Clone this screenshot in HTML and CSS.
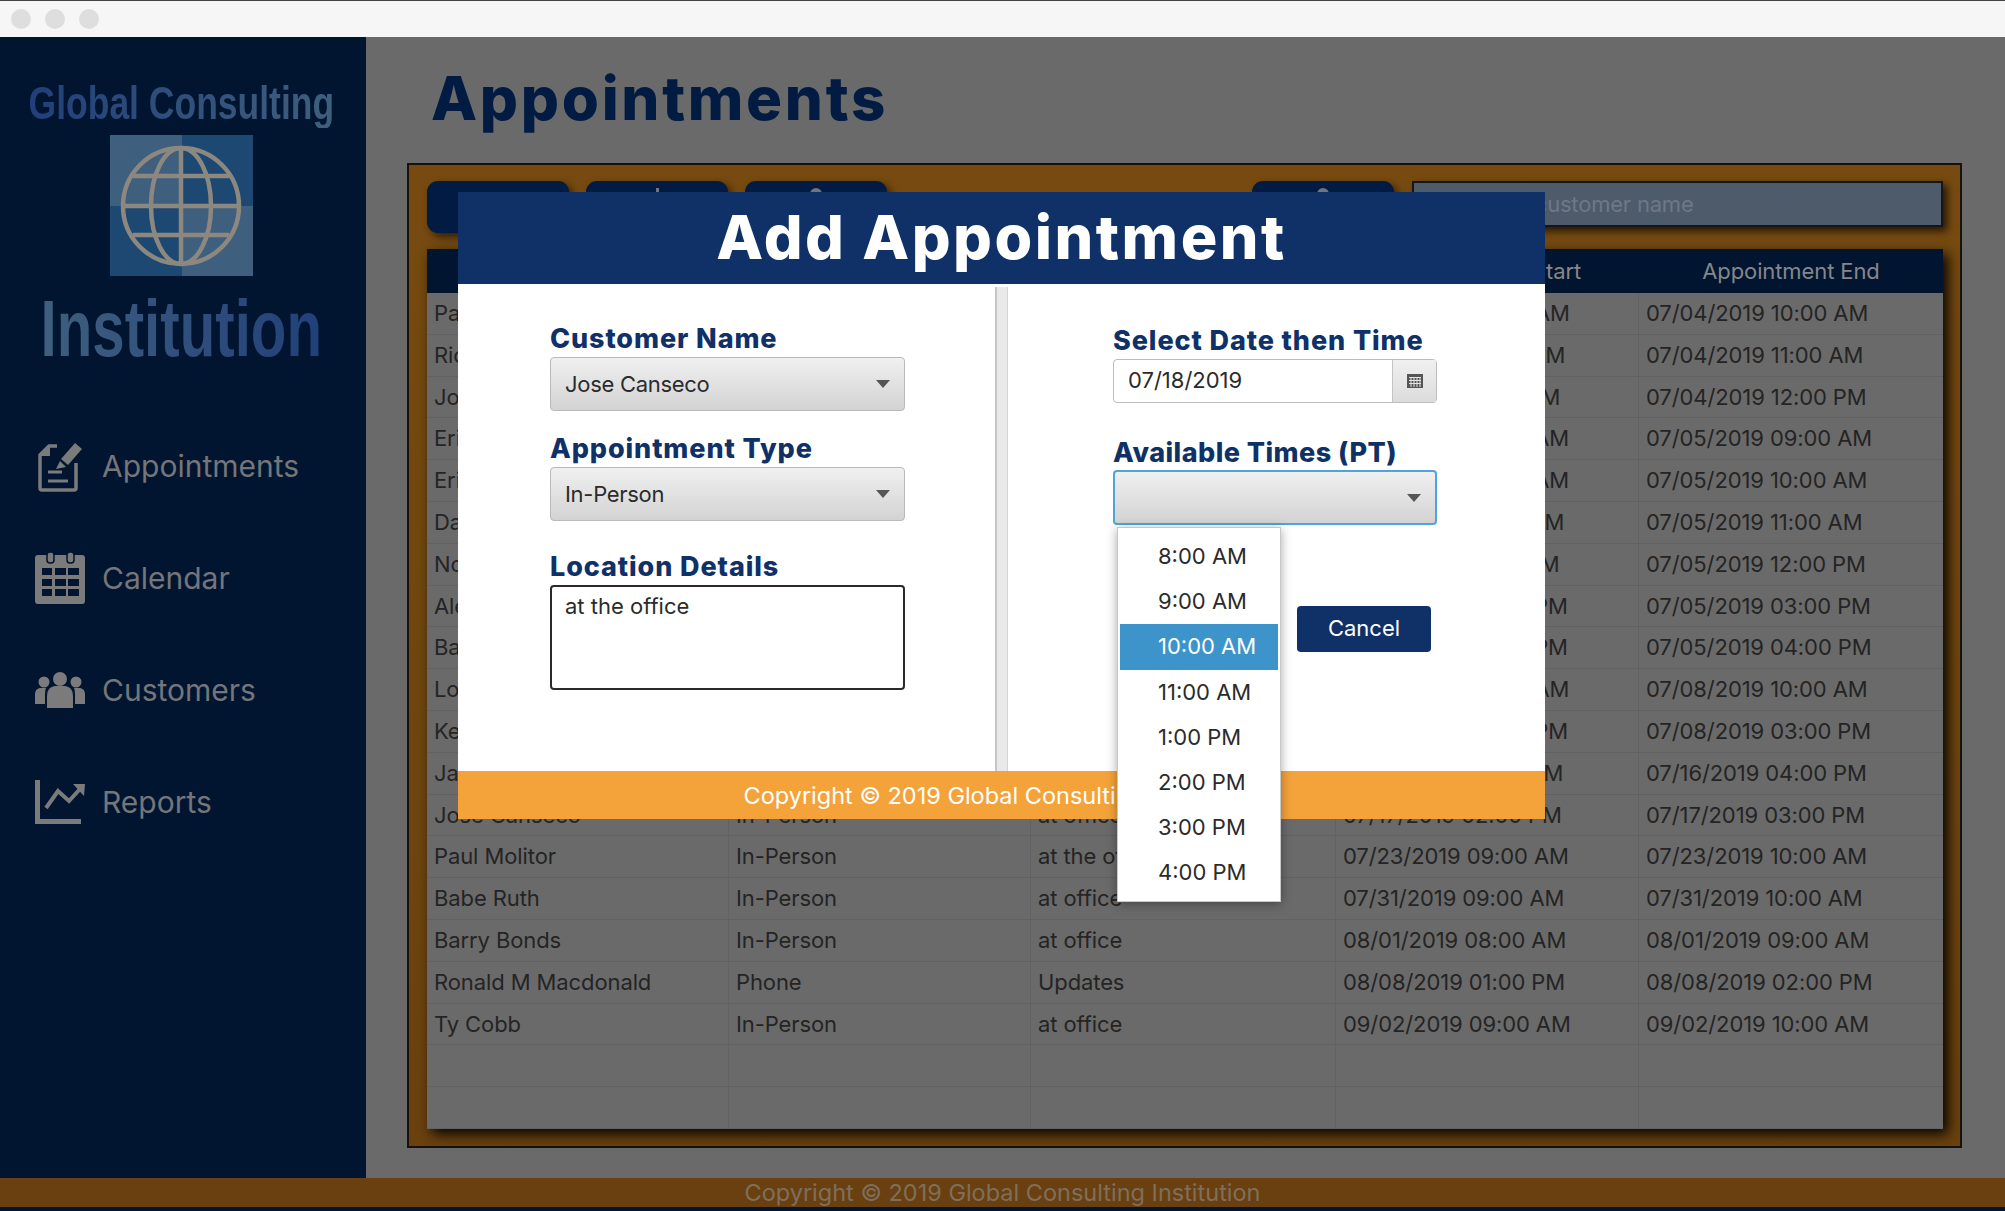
FILE: index.html
```html
<!DOCTYPE html>
<html lang="en">
<head>
    <meta charset="UTF-8">
    <title>Appointments</title>
    <link rel="stylesheet" href="styles.css">
</head>
<body>

<div class="titlebar">
    <span class="dot"></span>
    <span class="dot"></span>
    <span class="dot"></span>
</div>

<div class="app">
    <div class="sidebar">
        <div class="brand">
            <div class="brand-top">Global Consulting</div>
            <svg class="globe" viewBox="0 0 143 141">
                <rect width="72" height="71" fill="#3f5f7e"/>
                <rect x="72" width="71" height="71" fill="#1d4872"/>
                <rect y="71" width="72" height="70" fill="#1d4872"/>
                <rect x="72" y="71" width="71" height="70" fill="#3f5f7e"/>
                <g fill="none" stroke="#8c8880" stroke-width="4.5">
                    <circle cx="71" cy="71" r="58"/>
                    <ellipse cx="71" cy="71" rx="30" ry="58"/>
                    <path d="M71 13V129M13 71H129M23 41H119M23 100H119"/>
                </g>
            </svg>
            <div class="brand-bottom">Institution</div>
        </div>
        <ul class="nav">
            <li>
                <svg class="nav-icon" viewBox="0 0 50 52">
                    <path d="M22 6H14L5 15V48Q5 50 7 50H39Q41 50 41 48V23" fill="none" stroke="#7b7b7b" stroke-width="3.5"/>
                    <path d="M15 6V16H5Z" fill="#7b7b7b"/>
                    <path d="M40 3L47 9L33 25L26 19Z" fill="#7b7b7b"/>
                    <path d="M25 21L31 27L21 29Z" fill="#7b7b7b"/>
                    <path d="M13 32H27M13 41H33" stroke="#7b7b7b" stroke-width="3"/>
                </svg>
                Appointments
            </li>
            <li>
                <svg class="nav-icon" viewBox="0 0 50 52">
                    <rect y="3" width="50" height="49" rx="3" fill="#7b7b7b"/>
                    <rect x="12" y="0" width="7" height="11" rx="3" fill="#7b7b7b" stroke="#011530" stroke-width="1.5"/>
                    <rect x="32" y="0" width="7" height="11" rx="3" fill="#7b7b7b" stroke="#011530" stroke-width="1.5"/>
                    <path d="M7 16h10v7H7zM20 16h11v7H20zM33 16h11v7H33zM7 27h10v7H7zM20 27h11v7H20zM33 27h11v7H33zM7 37h10v7H7zM20 37h11v7H20zM33 37h11v7H33z" fill="#011530"/>
                </svg>
                Calendar
            </li>
            <li>
                <svg class="nav-icon" viewBox="0 0 50 36">
                    <circle cx="25" cy="7" r="7" fill="#7b7b7b"/>
                    <circle cx="9" cy="10" r="5.5" fill="#7b7b7b"/>
                    <circle cx="41" cy="10" r="5.5" fill="#7b7b7b"/>
                    <path d="M12 36V24Q12 15 20 14H30Q38 15 38 24V36Z" fill="#7b7b7b"/>
                    <path d="M0 32V22Q0 17 5 16H11Q10 18 10 24V32ZM50 32V22Q50 17 45 16H39Q40 18 40 24V32Z" fill="#7b7b7b"/>
                </svg>
                Customers
            </li>
            <li>
                <svg class="nav-icon" viewBox="0 0 50 44">
                    <path d="M2.5 0V41.5H46" fill="none" stroke="#7b7b7b" stroke-width="5"/>
                    <path d="M11 28L23 11L34 21L45 9" fill="none" stroke="#7b7b7b" stroke-width="4"/>
                    <path d="M38 4L50 4L49 16Z" fill="#7b7b7b"/>
                </svg>
                Reports
            </li>
        </ul>
    </div>

    <div class="main">
        <h1>Appointments</h1>
        <div class="panel">
            <div class="toolbar">
                <button class="tool-btn"></button>
                <button class="tool-btn"><span class="peek peek-tip"></span></button>
                <button class="tool-btn"><span class="peek"></span></button>
                <button class="tool-btn tool-search"><span class="peek"></span></button>
                <input class="search" type="text" placeholder="Search by customer name">
            </div>

            <div class="grid-table">
                <div class="grid-row grid-head">
                    <div></div>
                    <div></div>
                    <div></div>
                    <div>Appointment Start</div>
                    <div>Appointment End</div>
                </div>
                <div class="grid-row"><div>Paul Molitor</div><div></div><div></div><div>07/04/2019 09:00 AM</div><div>07/04/2019 10:00 AM</div></div>
                <div class="grid-row"><div>Rickey Henderson</div><div></div><div></div><div>07/04/2019 10:00 AM</div><div>07/04/2019 11:00 AM</div></div>
                <div class="grid-row"><div>Jose Canseco</div><div></div><div></div><div>07/04/2019 11:00 AM</div><div>07/04/2019 12:00 PM</div></div>
                <div class="grid-row"><div>Eric Davis</div><div></div><div></div><div>07/05/2019 08:00 AM</div><div>07/05/2019 09:00 AM</div></div>
                <div class="grid-row"><div>Eric Davis</div><div></div><div></div><div>07/05/2019 09:00 AM</div><div>07/05/2019 10:00 AM</div></div>
                <div class="grid-row"><div>Dave Winfield</div><div></div><div></div><div>07/05/2019 10:00 AM</div><div>07/05/2019 11:00 AM</div></div>
                <div class="grid-row"><div>Nolan Ryan</div><div></div><div></div><div>07/05/2019 11:00 AM</div><div>07/05/2019 12:00 PM</div></div>
                <div class="grid-row"><div>Alex Rodriguez</div><div></div><div></div><div>07/05/2019 02:00 PM</div><div>07/05/2019 03:00 PM</div></div>
                <div class="grid-row"><div>Babe Ruth</div><div></div><div></div><div>07/05/2019 03:00 PM</div><div>07/05/2019 04:00 PM</div></div>
                <div class="grid-row"><div>Lou Gehrig</div><div></div><div></div><div>07/08/2019 09:00 AM</div><div>07/08/2019 10:00 AM</div></div>
                <div class="grid-row"><div>Ken Griffey</div><div></div><div></div><div>07/08/2019 02:00 PM</div><div>07/08/2019 03:00 PM</div></div>
                <div class="grid-row"><div>Jackie Robinson</div><div></div><div></div><div>07/16/2019 03:00 PM</div><div>07/16/2019 04:00 PM</div></div>
                <div class="grid-row"><div>Jose Canseco</div><div>In-Person</div><div>at office</div><div>07/17/2019 02:00 PM</div><div>07/17/2019 03:00 PM</div></div>
                <div class="grid-row"><div>Paul Molitor</div><div>In-Person</div><div>at the office</div><div>07/23/2019 09:00 AM</div><div>07/23/2019 10:00 AM</div></div>
                <div class="grid-row"><div>Babe Ruth</div><div>In-Person</div><div>at office</div><div>07/31/2019 09:00 AM</div><div>07/31/2019 10:00 AM</div></div>
                <div class="grid-row"><div>Barry Bonds</div><div>In-Person</div><div>at office</div><div>08/01/2019 08:00 AM</div><div>08/01/2019 09:00 AM</div></div>
                <div class="grid-row"><div>Ronald M Macdonald</div><div>Phone</div><div>Updates</div><div>08/08/2019 01:00 PM</div><div>08/08/2019 02:00 PM</div></div>
                <div class="grid-row"><div>Ty Cobb</div><div>In-Person</div><div>at office</div><div>09/02/2019 09:00 AM</div><div>09/02/2019 10:00 AM</div></div>
                <div class="grid-row"><div></div><div></div><div></div><div></div><div></div></div>
                <div class="grid-row"><div></div><div></div><div></div><div></div><div></div></div>
            </div>
        </div>
    </div>
</div>

<div class="footer">Copyright © 2019 Global Consulting Institution</div>
<div class="bottom-strip"></div>

<!-- dialog -->
<div class="modal">
    <div class="modal-head">Add Appointment</div>
    <div class="modal-body">
        <div class="col-left">
            <label class="field-label">Customer Name</label>
            <div class="combo"><span>Jose Canseco</span><i class="arrow"></i></div>

            <label class="field-label label-type">Appointment Type</label>
            <div class="combo"><span>In-Person</span><i class="arrow"></i></div>

            <label class="field-label label-location">Location Details</label>
            <div class="notes">at the office</div>
        </div>

        <div class="divider"></div>

        <div class="col-right">
            <label class="field-label label-date">Select Date then Time</label>
            <div class="date-field">
                <span class="date-value">07/18/2019</span>
                <span class="date-btn">
                    <svg width="16" height="14" viewBox="0 0 16 14">
                        <path d="M0 0H16V14H0Z" fill="#555"/>
                        <path d="M2 3.5H14M2 6.5H14M2 9.5H14M4 3V13M7 3V13M10 3V13M13 3V13" stroke="#e4e4e4" stroke-width="1"/>
                    </svg>
                </span>
            </div>

            <label class="field-label label-times">Available Times (PT)</label>
            <div class="times-wrap">
                <div class="combo combo-focus"><i class="arrow"></i></div>
                <ul class="popup">
                    <li>8:00 AM</li>
                    <li>9:00 AM</li>
                    <li class="selected">10:00 AM</li>
                    <li>11:00 AM</li>
                    <li>1:00 PM</li>
                    <li>2:00 PM</li>
                    <li>3:00 PM</li>
                    <li>4:00 PM</li>
                </ul>
            </div>

            <div class="actions">
                <button class="cancel">Cancel</button>
            </div>
        </div>
    </div>
    <div class="modal-foot">Copyright © 2019 Global Consulting Institution</div>
</div>

</body>
</html>
```

FILE: styles.css
```css
body {
    font-family: Inter, "Liberation Sans", sans-serif;
    margin: 0;
    padding: 0;
    width: 2005px;
    height: 1211px;
    overflow: hidden;
    background-color: #011530;
    position: relative;
}

.titlebar {
    height: 36px;
    background-color: #f6f6f6;
    border-top: 1px solid #444;
    display: flex;
    align-items: center;
    gap: 14px;
    padding-left: 11px;
}

.dot {
    width: 20px;
    height: 20px;
    border-radius: 50%;
    background-color: #dedede;
}

.app {
    display: flex;
    height: 1141px;
}

.sidebar {
    width: 366px;
    background-color: #011530;
}

.brand {
    height: 332px;
    padding-top: 41px;
    padding-right: 4px;
    display: flex;
    flex-direction: column;
    align-items: center;
}

.brand-top,
.brand-bottom {
    font-family: "Liberation Sans", sans-serif;
    font-weight: bold;
    white-space: nowrap;
    background: linear-gradient(90deg, #21407a, #3f5f7e);
    -webkit-background-clip: text;
    background-clip: text;
    color: transparent;
}

.brand-top {
    font-size: 47px;
    line-height: 50px;
    transform: scaleX(0.755);
}

.brand-bottom {
    font-size: 80px;
    line-height: 90px;
    margin-top: 8px;
    transform: scaleX(0.728);
    background: linear-gradient(90deg, #3f5f7e, #21407a);
    -webkit-background-clip: text;
    background-clip: text;
}

.globe {
    width: 143px;
    height: 141px;
    margin-top: 7px;
    display: block;
    flex-shrink: 0;
}

.nav {
    list-style-type: none;
    margin: 0;
    padding: 0;
}

.nav li {
    height: 112px;
    padding-left: 35px;
    display: flex;
    align-items: center;
    gap: 17px;
    font-size: 30px;
    color: #74767a;
}

.nav-icon {
    width: 50px;
    flex-shrink: 0;
}

.main {
    flex: 1;
    background-color: #6a6a6a;
}

h1 {
    margin: 0;
    height: 126px;
    padding-left: 65px;
    box-sizing: border-box;
    font-size: 60px;
    line-height: 122px;
    font-weight: 800;
    letter-spacing: 2.7px;
    color: #011b42;
}

.panel {
    box-sizing: border-box;
    width: 1555px;
    height: 985px;
    margin-left: 41px;
    padding: 16px 17px 0 18px;
    border: 2px solid #16130e;
    background: linear-gradient(#774b10, #6a410f);
}

.toolbar {
    display: flex;
    gap: 17px;
    height: 52px;
}

.tool-btn {
    width: 142px;
    height: 52px;
    padding: 7px 0 0;
    background-color: #011b42;
    border: none;
    border-radius: 11px;
    box-shadow: 4px 4px 8px rgba(0, 0, 0, 0.6);
    display: flex;
    justify-content: center;
    align-items: flex-start;
}

.tool-search {
    margin-left: auto;
    margin-right: 1px;
}

.peek {
    width: 12px;
    height: 12px;
    border-radius: 50%;
    background-color: #70747c;
}

.peek-tip {
    width: 3px;
    border-radius: 0;
}

.search {
    box-sizing: border-box;
    width: 531px;
    height: 46px;
    padding: 0 0 0 12px;
    font-family: inherit;
    font-size: 22px;
    letter-spacing: -0.2px;
    background-color: #4e5b6b;
    border: 2px solid #14161a;
    box-shadow: 4px 4px 8px rgba(0, 0, 0, 0.7);
}

.search::placeholder {
    color: #6d7886;
}

.grid-table {
    margin-top: 16px;
    width: 1516px;
    height: 880px;
    background-color: #6a6a6a;
    box-shadow: 5px 5px 12px rgba(0, 0, 0, 0.95);
    font-size: 22px;
    letter-spacing: -0.1px;
    color: #242424;
}

.grid-row {
    display: grid;
    grid-template-columns: 302px 302px 305px 303px 304px;
    height: 41.8px;
    box-sizing: border-box;
    border-bottom: 1px solid #626262;
}

.grid-row > div {
    padding-left: 7px;
    line-height: 41px;
    border-right: 1px solid #626262;
}

.grid-row > div:last-child {
    border-right: none;
}

.grid-head {
    height: 44px;
    background-color: #011530;
    color: #85878b;
    border-bottom: none;
}

.grid-head > div {
    text-align: center;
    padding-left: 0;
    line-height: 44px;
    border-right: none;
}

.footer {
    height: 29px;
    background-color: #6a4010;
    color: #7e6f5c;
    font-size: 23.5px;
    line-height: 30px;
    text-align: center;
}

.bottom-strip {
    height: 4px;
    background-color: #011530;
}

.modal {
    position: absolute;
    left: 458px;
    top: 192px;
    width: 1087px;
    height: 627px;
    background-color: #fff;
    display: flex;
    flex-direction: column;
}

.modal-head {
    height: 92px;
    background-color: #0f3167;
    color: #fff;
    font-size: 61px;
    font-weight: 800;
    letter-spacing: 2.5px;
    line-height: 90px;
    text-align: center;
}

.modal-body {
    flex: 1;
    display: flex;
}

.modal-foot {
    height: 48px;
    background-color: #f4a23a;
    color: #fff;
    font-size: 23.5px;
    line-height: 50px;
    text-align: center;
}

.col-left {
    width: 355px;
    padding: 40px 90px 0 92px;
}

.divider {
    box-sizing: border-box;
    width: 13px;
    margin-top: 3px;
    background-color: #e9e9e9;
    border-left: 2px solid #c6c6c6;
    border-right: 1px solid #d4d4d4;
}

.col-right {
    width: 324px;
    padding: 42px 0 0 105px;
}

.field-label {
    display: block;
    font-size: 27px;
    font-weight: 800;
    letter-spacing: 0.9px;
    line-height: 30px;
    color: #0f3167;
    margin-bottom: 3px;
}

.label-type {
    margin-top: 23px;
}

.label-location {
    margin-top: 31px;
    margin-bottom: 3px;
}

.label-date {
    margin-bottom: 3px;
}

.label-times {
    margin-top: 35px;
    margin-bottom: 2px;
    letter-spacing: 0.45px;
}

.combo {
    box-sizing: border-box;
    height: 54px;
    padding: 0 14px;
    background: linear-gradient(#f0f0f0, #d3d3d3);
    border: 1px solid #b9b9b9;
    border-radius: 4px;
    display: flex;
    align-items: center;
    justify-content: space-between;
    font-size: 22px;
    letter-spacing: -0.3px;
    color: #2b2b2b;
}

.combo-focus {
    height: 55px;
    justify-content: flex-end;
    border: 2px solid #4ea6d8;
    padding-right: 14px;
}

.arrow {
    width: 0;
    height: 0;
    border-left: 7px solid transparent;
    border-right: 7px solid transparent;
    border-top: 8px solid #555;
}

.notes {
    box-sizing: border-box;
    height: 105px;
    padding: 4px 13px;
    border: 2px solid #2a2a2a;
    border-radius: 4px;
    font-size: 22px;
    line-height: 30px;
    color: #2b2b2b;
}

.date-field {
    box-sizing: border-box;
    height: 44px;
    display: flex;
    border: 1px solid #bcbcbc;
    border-radius: 4px;
    font-size: 22px;
    color: #2b2b2b;
}

.date-value {
    flex: 1;
    padding-left: 14px;
    line-height: 40px;
}

.date-btn {
    width: 43px;
    background: linear-gradient(#f0f0f0, #dcdcdc);
    border-left: 1px solid #c4c4c4;
    display: flex;
    align-items: center;
    justify-content: center;
}

.times-wrap {
    position: relative;
}

.popup {
    list-style-type: none;
    position: absolute;
    left: 4px;
    top: 57px;
    width: 164px;
    height: 375px;
    box-sizing: border-box;
    margin: 0;
    padding: 6px 2px;
    background-color: #fff;
    border: 1px solid #c8c8c8;
    box-shadow: 0 2px 10px rgba(0, 0, 0, 0.35);
    font-size: 22px;
    color: #2b2b2b;
}

.popup li {
    height: 45.2px;
    line-height: 45px;
    padding-left: 38px;
}

.popup .selected {
    background-color: #3d94ca;
    color: #fff;
}

.actions {
    display: flex;
    justify-content: flex-end;
    margin-top: 81px;
    padding-right: 6px;
}

.cancel {
    width: 134px;
    height: 46px;
    padding: 0 0 2px;
    background-color: #0f3167;
    color: #fff;
    border: none;
    border-radius: 4px;
    font-family: inherit;
    font-size: 22px;
}
```
